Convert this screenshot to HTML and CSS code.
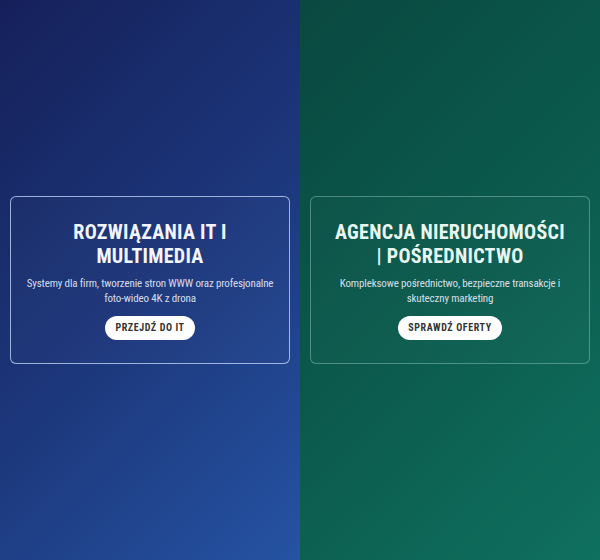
FILE: index.html
```html
<!DOCTYPE html>
<html lang="pl">
<head>
<meta charset="utf-8">
<title>Wybierz usługę</title>
<link rel="stylesheet" href="styles.css">
</head>
<body>
<main class="split">
  <section class="half half-it">
    <div class="card card-it">
      <h2 class="card-title">ROZWIĄZANIA IT I MULTIMEDIA</h2>
      <p class="card-text">Systemy dla firm, tworzenie stron WWW oraz profesjonalne foto-wideo 4K z drona</p>
      <a class="card-btn" href="#it">PRZEJDŹ DO IT</a>
    </div>
  </section>
  <section class="half half-estate">
    <div class="card card-estate">
      <h2 class="card-title">AGENCJA NIERUCHOMOŚCI | POŚREDNICTWO</h2>
      <p class="card-text">Kompleksowe pośrednictwo, bezpieczne transakcje i skuteczny marketing</p>
      <a class="card-btn" href="#nieruchomosci">SPRAWDŹ OFERTY</a>
    </div>
  </section>
</main>
</body>
</html>
```

FILE: styles.css
```css
* { box-sizing: border-box; }

html, body {
  margin: 0;
  height: 100%;
}

body {
  font-family: Roboto, "Liberation Sans", Arial, sans-serif;
  font-stretch: 75%;
  color: #fff;
}

.split {
  display: flex;
  height: 560px;
}

.half {
  flex: 1;
  display: flex;
  align-items: center;
  justify-content: center;
  padding: 0 10px;
}

.half-it {
  background: linear-gradient(135deg, #15205a 0%, #1c367a 50%, #2553a2 100%);
}

.half-estate {
  background: linear-gradient(135deg, #094840 0%, #0b5a4d 50%, #0f705f 100%);
}

.card {
  width: 280px;
  height: 168px;
  border-radius: 6px;
  padding: 23px 12px 0;
  text-align: center;
  display: flex;
  flex-direction: column;
  align-items: center;
}

.card-it {
  border: 1px solid rgba(200, 220, 255, 0.75);
  background: rgba(255, 255, 255, 0.02);
}

.card-estate {
  border: 1px solid rgba(190, 240, 225, 0.35);
  background: rgba(255, 255, 255, 0.02);
}

.card-title {
  margin: 0;
  max-width: 240px;
  font-weight: 700;
  font-size: 20px;
  line-height: 24px;
  letter-spacing: 0.3px;
  color: #f2f5ff;
}

.card-estate .card-title {
  color: #e8f7f2;
}

.card-text {
  margin: 8px 0 0;
  font-size: 11px;
  line-height: 15px;
  letter-spacing: -0.15px;
  color: rgba(235, 240, 255, 0.9);
}

.card-btn {
  margin-top: 10px;
  display: inline-block;
  background: #fff;
  color: #333;
  text-decoration: none;
  font-weight: 700;
  font-size: 10px;
  letter-spacing: 0.6px;
  line-height: 24px;
  padding: 0 10px;
  border-radius: 12px;
}
```
